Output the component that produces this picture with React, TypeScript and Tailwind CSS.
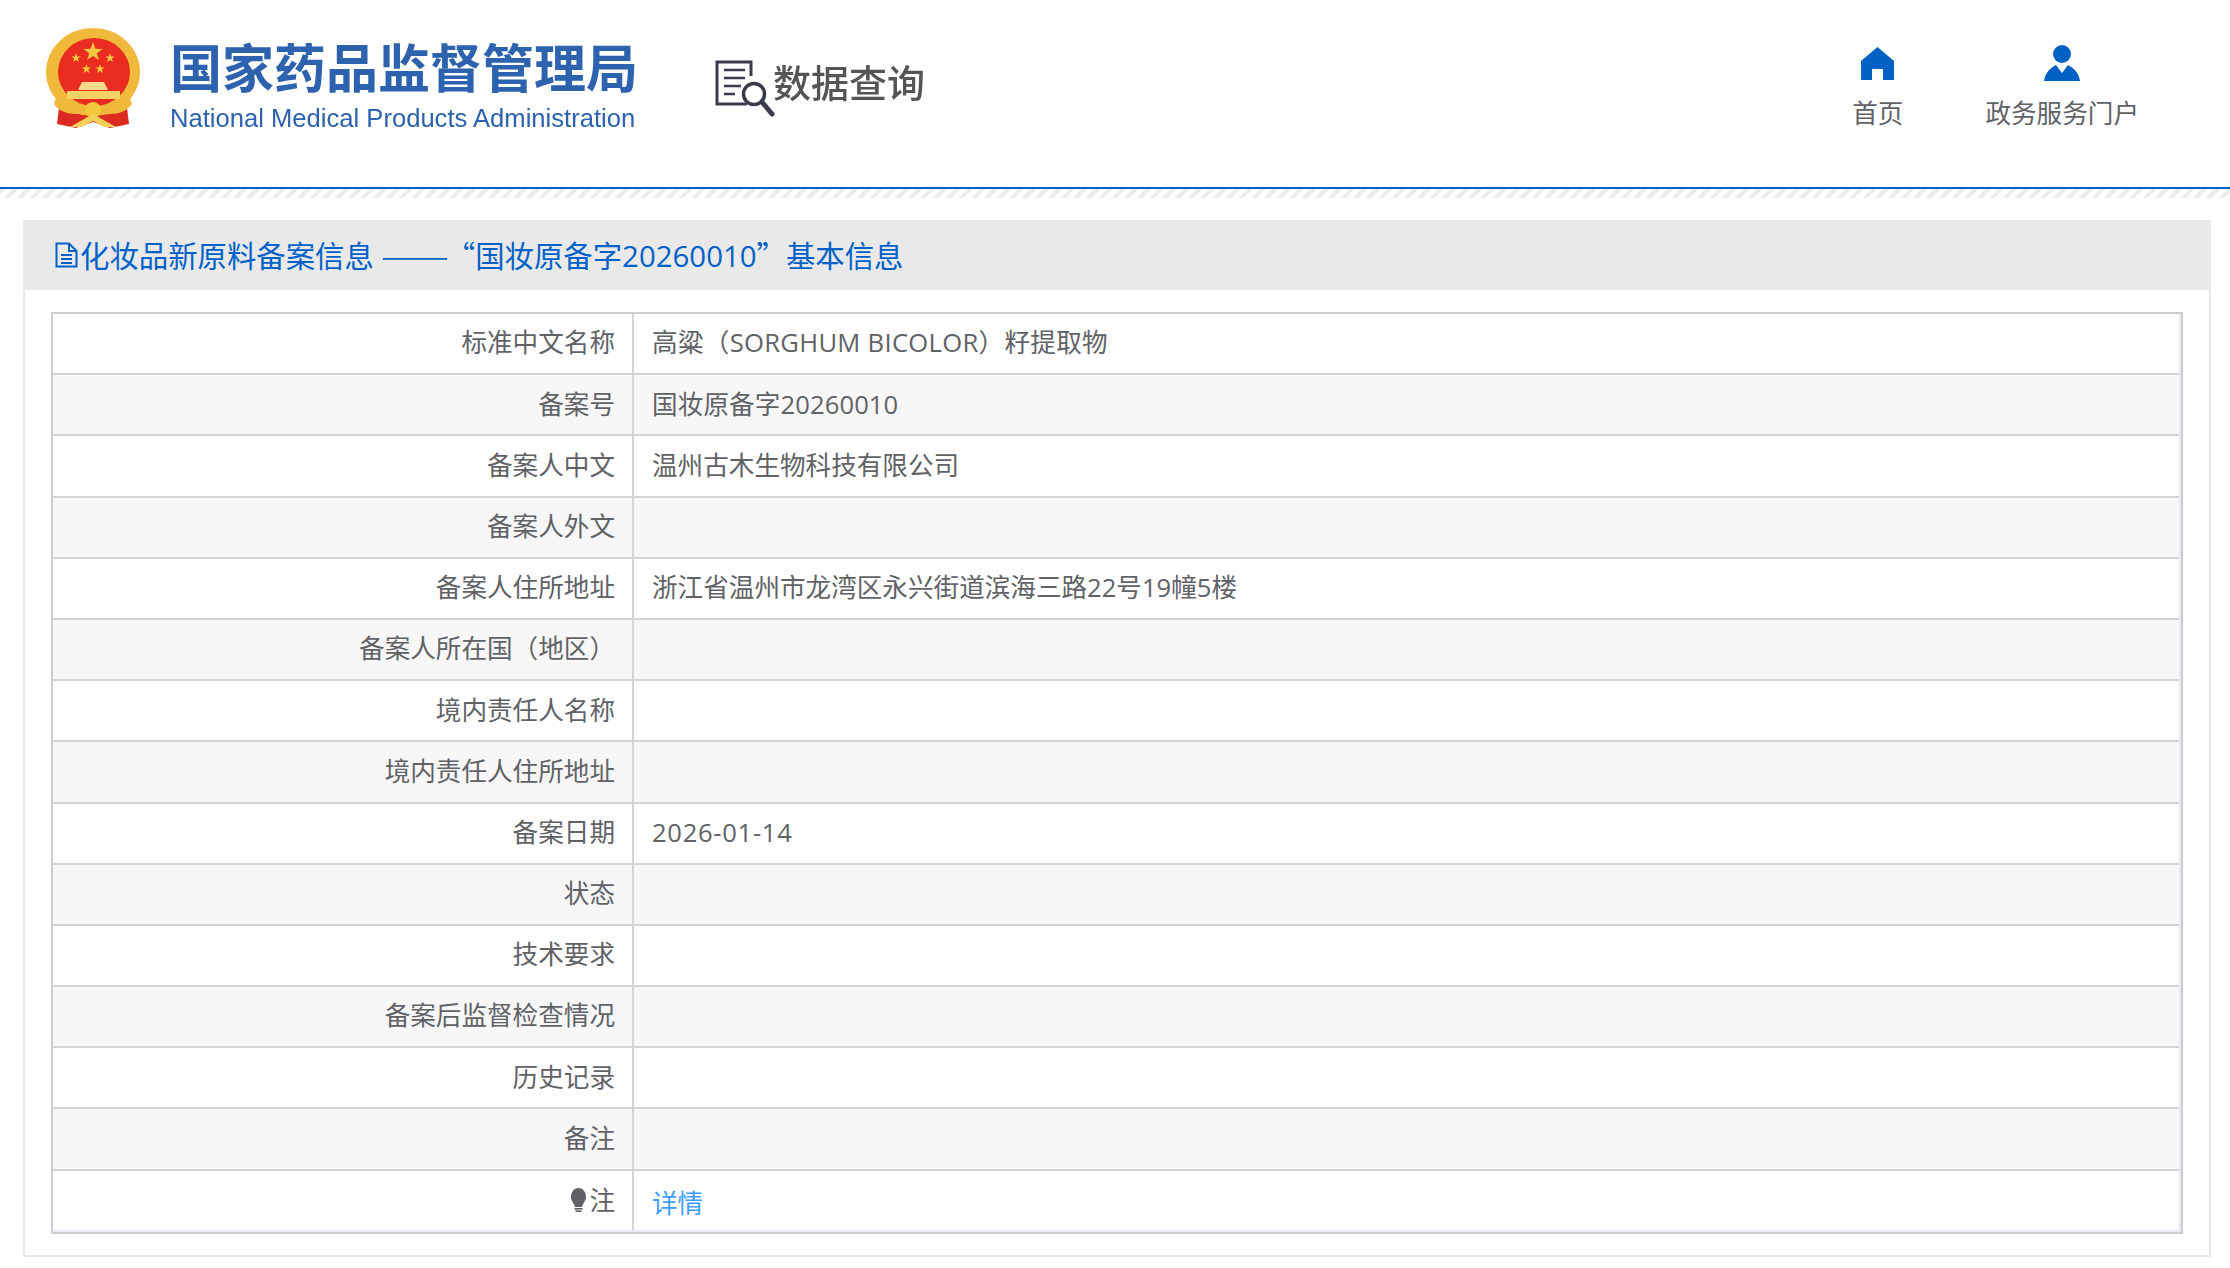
const rows: { label: string; value?: string; spacing?: string }[] = [
  { label: '标准中文名称', value: '高粱（SORGHUM BICOLOR）籽提取物', spacing: 'tracking-[0.3px]' },
  { label: '备案号', value: '国妆原备字20260010', spacing: 'tracking-[0.1px]' },
  { label: '备案人中文', value: '温州古木生物科技有限公司' },
  { label: '备案人外文' },
  { label: '备案人住所地址', value: '浙江省温州市龙湾区永兴街道滨海三路22号19幢5楼' },
  { label: '备案人所在国（地区）' },
  { label: '境内责任人名称' },
  { label: '境内责任人住所地址' },
  { label: '备案日期', value: '2026-01-14', spacing: 'tracking-[0.7px]' },
  { label: '状态' },
  { label: '技术要求' },
  { label: '备案后监督检查情况' },
  { label: '历史记录' },
  { label: '备注' },
]

function Star({ x, y, r }: { x: number; y: number; r: number }) {
  const pts = Array.from({ length: 10 }, (_, i) => {
    const a = (Math.PI / 5) * i - Math.PI / 2
    const d = i % 2 === 0 ? r : r * 0.4
    return `${x + d * Math.cos(a)},${y + d * Math.sin(a)}`
  }).join(' ')
  return <polygon points={pts} fill="#f3c83c" />
}

function Emblem() {
  return (
    <svg width="94" height="102" viewBox="0 0 94 102" className="shrink-0 blur-[0.7px]">
      <path d="M14 72 L11 96 L30 100 L47 94 L64 100 L83 96 L80 72Z" fill="#dc2a22" />
      <ellipse cx="47" cy="44" rx="47" ry="44" fill="#f0b93a" />
      <ellipse cx="48" cy="44" rx="36" ry="34" fill="#ea2d20" />
      <Star x={47} y={24} r={10} />
      <Star x={30} y={30} r={5} />
      <Star x={64} y={30} r={5} />
      <Star x={40.5} y={41} r={5} />
      <Star x={54} y={41} r={5} />
      <path d="M36 54 H58 L62 62 H32Z" fill="#f7d98a" />
      <rect x="21" y="63" width="53" height="8" fill="#f5d264" />
      <path d="M10 70 C20 82 34 76 47 80 C60 76 74 82 84 70 L86 76 C76 90 60 84 47 88 C34 84 18 90 8 76Z" fill="#f0b93a" />
      <circle cx="47" cy="82" r="8" fill="#f3c83c" />
      <path d="M24 99 L47 86 L70 99 L58 99 L47 93 L36 99Z" fill="#f3d05a" />
    </svg>
  )
}

function SearchDocIcon() {
  return (
    <svg width="60" height="60" viewBox="0 0 60 60" fill="none" stroke="#3a3b4a" className="shrink-0 blur-[0.4px]">
      <path d="M32 44 H2 V2 H36 V16" strokeWidth="3" />
      <path d="M9 10 H30 M9 18 H30 M9 26 H26 M9 34 H20" strokeWidth="2.5" />
      <circle cx="39" cy="34" r="10.5" strokeWidth="3.5" />
      <path d="M47 42 L57 54" strokeWidth="5" strokeLinecap="round" />
    </svg>
  )
}

function DocIcon() {
  return (
    <svg width="23" height="26" viewBox="0 0 23 26" fill="none" stroke="#0061c8" strokeWidth="2" className="shrink-0">
      <path d="M1.5 1.5 H14 L21.5 9 V24.5 H1.5Z" />
      <path d="M14 1.5 V9 H21.5" />
      <path d="M6 13 H17 M6 17 H17 M6 21 H17" />
    </svg>
  )
}

export default function App() {
  return (
    <div className="min-h-[1268px] bg-white font-['Open_Sans','Noto_Sans_CJK_SC',sans-serif] text-[25.6px] text-[#606266]">
      {/* Header */}
      <div className="flex h-[189px] items-start justify-between border-b-2 border-[#0061c8]">
        <div className="flex items-start pl-[46px] pt-[28px]">
          <Emblem />
          <div className="ml-[30px] flex w-[470px] flex-col whitespace-nowrap blur-[0.5px]">
            <div className="mt-[6px] text-[52px] font-bold leading-[68px] text-[#2c62ae]">国家药品监督管理局</div>
            <div className="mt-[2px] font-['Liberation_Sans',sans-serif] text-[25.6px] leading-[28px] text-[#2c62ae]">
              National Medical Products Administration
            </div>
          </div>
          <div className="ml-[75px] flex items-start pt-[32px]">
            <SearchDocIcon />
            <span className="-ml-[2px] -mt-[6px] whitespace-nowrap text-[38px] font-medium leading-[56px] text-[#555555] blur-[0.4px]">
              数据查询
            </span>
          </div>
        </div>
        <div className="flex gap-[82px] pr-[91px] pt-[45px]">
          <div className="flex flex-col items-center">
            <svg width="33" height="35" viewBox="0 0 33 35" fill="#0061c4">
              <path d="M16.5 2 L33 16 V35 H22 V24 H11 V35 H0 V16Z" />
            </svg>
            <span className="mt-[16px] leading-[36px]">首页</span>
          </div>
          <div className="flex flex-col items-center">
            <svg width="36" height="36" viewBox="0 0 36 36" fill="#0061c4">
              <circle cx="18" cy="9" r="9" />
              <path d="M0 36 C1 28 6 23 12 20 L18 28 L24 20 C30 23 35 28 36 36Z" />
            </svg>
            <span className="mt-[15px] whitespace-nowrap leading-[36px]">政务服务门户</span>
          </div>
        </div>
      </div>
      <div className="h-[9px] bg-[repeating-linear-gradient(135deg,#ececec_0px,#ececec_4px,#ffffff_4px,#ffffff_9px)]" />

      {/* Panel */}
      <div className="ml-[23px] mt-[22px] w-[2188px] border-x-2 border-b-2 border-[#e8e8e8]">
        <div className="-mx-[2px] flex h-[70px] items-center gap-[2px] bg-[#e9e9e9] pl-[32px] text-[29.4px] text-[#0061c8]">
          <DocIcon />
          <span className="whitespace-pre">
            化妆品新原料备案信息
            <span className="font-['Noto_Sans_CJK_SC',sans-serif]"> </span>
            <span className="mr-[16px] inline-block origin-left scale-x-[1.38] font-['Noto_Sans_CJK_SC',sans-serif]">——</span>
            <span className="font-['Noto_Sans_CJK_SC',sans-serif]">“</span>
            国妆原备字20260010
            <span className="font-['Noto_Sans_CJK_SC',sans-serif]">”</span>
            基本信息
          </span>
        </div>

        <div className="mx-[26px] mb-[21px] mt-[22px] border-2 border-[#cccccc]">
          <div className="border-r-2 border-[#e8ebf3]">
            {rows.map((row, i) => (
              <div
                key={row.label}
                className={`flex h-[61.2px] items-center border-b-2 border-[#d4d4d4] ${i % 2 === 1 ? 'bg-[#f7f7f7]' : 'bg-white'}`}
              >
                <div className="flex h-full w-[581px] items-center justify-end border-r-2 border-[#d4d4d4] pr-[17px]">
                  {row.label}
                </div>
                <div className={`pl-[18px] ${row.spacing ?? ''}`}>{row.value}</div>
              </div>
            ))}
            <div className="flex h-[61px] items-center border-b-2 border-[#e8ebf3]">
              <div className="flex h-full w-[581px] items-center justify-end border-r-2 border-[#d4d4d4] pr-[17px]">
                <svg width="19" height="24" viewBox="0 0 19 24" fill="#606266" className="mr-[1px] shrink-0">
                  <path d="M9.5 0 C14 0 17 4 17 9 C17 13 14 15 13 19 H6 C5 15 2 13 2 9 C2 4 5 0 9.5 0Z" />
                  <rect x="5.5" y="20" width="8" height="1.6" />
                  <rect x="6.5" y="22.4" width="6" height="1.6" />
                </svg>
                <span className="mt-[3px]">注</span>
              </div>
              <span className="mt-[8px] pl-[18px] text-[#409eff]">详情</span>
            </div>
          </div>
        </div>
      </div>
    </div>
  )
}
